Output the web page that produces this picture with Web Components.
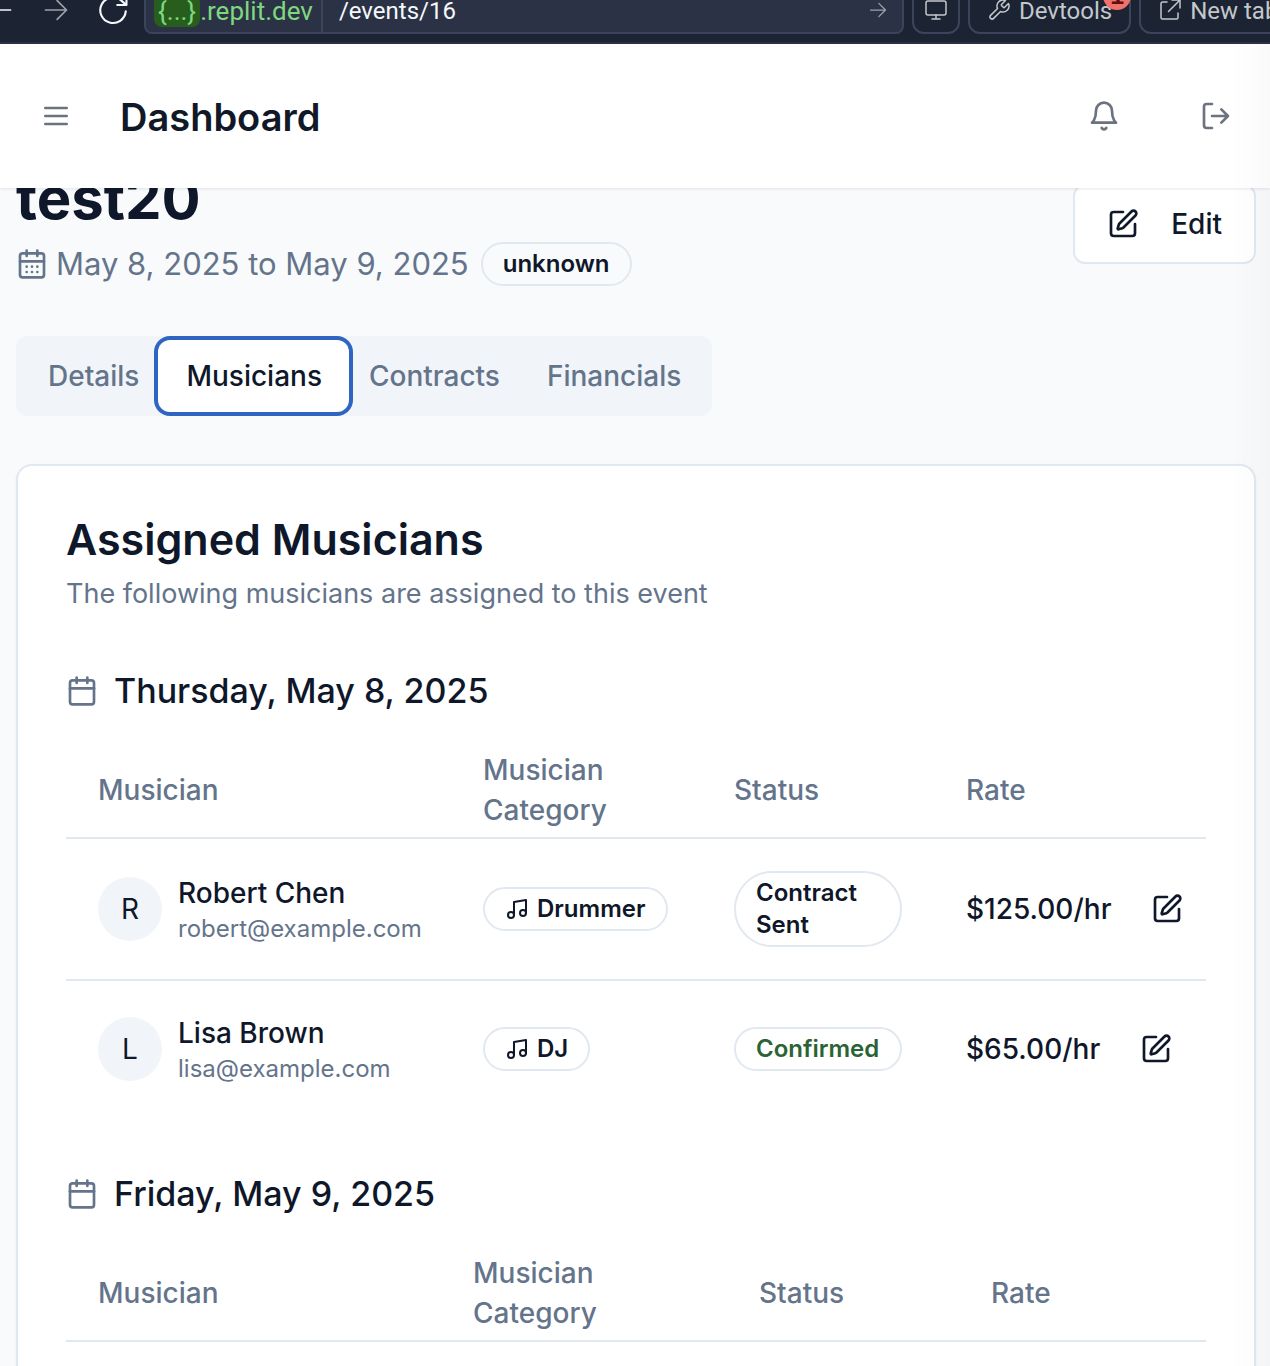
<!DOCTYPE html>
<html lang="en">
<head>
<meta charset="utf-8">
<meta name="viewport" content="width=device-width, initial-scale=1">
<title>Dashboard</title>
<style>
  :root {
    --ink: #0f172a; --muted: #64748b; --line: #e2e8f0; --page: #f9fafc; --soft: #f1f5f9;
  }
  html, body { height: 100%; }
  body { margin: 0; overflow: hidden; background: var(--page); color: var(--ink);
    font-family: Inter, "Liberation Sans", sans-serif; font-size: 28px; line-height: 40px; }
</style>
</head>
<body>
<events-page></events-page>
<script>
const ICONS = {
  left: '<path d="M21 12H3M11 4l-8 8 8 8"/>',
  right: '<path d="M3 12h18M13 4l8 8-8 8"/>',
  reload: '<path d="M21 13a9 9 0 1 1-3.500-8L21 8"/><path d="M21.500 2v6.500h-6.500"/>',
  monitor: '<rect x="2" y="3" width="20" height="14" rx="2"/><path d="M8 21h8M12 17v4"/>',
  wrench: '<path d="M14.700 6.300a1 1 0 0 0 0 1.400l1.600 1.600a1 1 0 0 0 1.400 0l3.770-3.770a6 6 0 0 1-7.940 7.940l-6.910 6.910a2.120 2.120 0 0 1-3-3l6.910-6.910a6 6 0 0 1 7.940-7.940l-3.760 3.760z"/>',
  external: '<path d="M9 4H4.500A1.500 1.500 0 0 0 3 5.500v14A1.500 1.500 0 0 0 4.500 21h14a1.500 1.500 0 0 0 1.500-1.500V15M14 2h8v8M22 2 10.500 13.500"/>',
  menu: '<path d="M4 12h16M4 6h16M4 18h16"/>',
  bell: '<path d="M6 8a6 6 0 0 1 12 0c0 7 3 9 3 9H3s3-2 3-9"/><path d="M10.300 21a1.940 1.940 0 0 0 3.400 0"/>',
  logout: '<path d="M9 21H5a2 2 0 0 1-2-2V5a2 2 0 0 1 2-2h4M16 17l5-5-5-5M21 12H9"/>',
  calendar: '<path d="M8 2v4M16 2v4"/><rect x="3" y="4" width="18" height="18" rx="2"/><path d="M3 10h18"/>',
  days: '<path d="M8 2v4M16 2v4"/><rect x="3" y="4" width="18" height="18" rx="2"/><path d="M3 10h18M8 14h.01M12 14h.01M16 14h.01M8 18h.01M12 18h.01M16 18h.01"/>',
  edit: '<path d="M12 3H5a2 2 0 0 0-2 2v14a2 2 0 0 0 2 2h14a2 2 0 0 0 2-2v-7"/><path d="M18.375 2.625a1 1 0 0 1 3 3l-9.013 9.014a2 2 0 0 1-.853.505l-2.873.84a.5.5 0 0 1-.62-.62l.84-2.873a2 2 0 0 1 .506-.852z"/>',
  music: '<path d="M9 18V5l12-2v13"/><circle cx="6" cy="18" r="3"/><circle cx="18" cy="16" r="3"/>'
};

const BASE = `*, *::before, *::after { box-sizing: border-box; }
  button { font: inherit; color: inherit; background: none; border: 0; padding: 0; margin: 0; cursor: pointer; }
  h1, h2, h3, p { margin: 0; }`;

class BaseElement extends HTMLElement {
  constructor() { super(); this.attachShadow({ mode: 'open' }); }
  connectedCallback() { this.shadowRoot.innerHTML = `<style>${BASE}${this.styles()}</style>${this.view()}`; }
}

customElements.define('ui-icon', class extends BaseElement {
  styles() { return `:host { display: block; flex: none; width: var(--icon, 32px); height: var(--icon, 32px); }
    svg { display: block; width: 100%; height: 100%; fill: none; stroke: currentColor; stroke-linecap: round; stroke-linejoin: round; }`; }
  view() { return `<svg viewBox="0 0 24 24" stroke-width="${this.getAttribute('weight') || 2}" aria-hidden="true">${ICONS[this.getAttribute('name')]}</svg>`; }
});

customElements.define('status-badge', class extends BaseElement {
  styles() { return `:host { display: inline-flex; align-items: center; gap: 8px; min-height: 44px; padding: 4px 20px;
      border: 2px solid var(--line); border-radius: 38px; font-size: 24px; line-height: 32px; font-weight: 600; vertical-align: middle; }
    :host([tone="success"]) { color: #2a6335; }
    ::slotted(ui-icon) { --icon: 24px; }`; }
  view() { return `<slot></slot>`; }
});

customElements.define('browser-bar', class extends BaseElement {
  styles() { return `:host { display: flex; align-items: flex-end; height: 44px; padding-bottom: 8px; overflow: hidden;
      background: #1c2333; border-bottom: 2px solid #2b3245; color: #c2c8cc;
      font-family: Roboto, "Liberation Sans", sans-serif; font-size: 24px; line-height: 32px; }
    .nav { display: flex; flex: none; align-items: center; width: 144px; height: 48px; gap: 28px; color: #f5f9fc; --icon: 28px; }
    .nav button:first-child { margin-left: -14px; }
    .nav .off { color: #9da2a6; }
    .nav .reload { margin-left: -2px; --icon: 34px; }
    .address { display: flex; flex: 1; min-width: 0; align-items: center; height: 48px; background: #2b3245; border: 2px solid #3c445c; border-radius: 8px; }
    .host { display: flex; align-items: center; align-self: stretch; padding: 2px 8px 0; border-right: 2px solid #3c445c; color: #7fd77f; font-size: 26px; }
    .chip { background: #285e1d; border-radius: 8px; padding: 0 4px; }
    input { flex: 1; min-width: 0; border: 0; padding: 2px 16px 0; background: none; color: #f5f9fc; font: inherit; outline: 0; }
    .go { color: #9da2a6; padding-right: 14px; --icon: 20px; }
    .tools { display: flex; flex: none; gap: 8px; padding-left: 8px; width: 366px; }
    .tools button { position: relative; display: flex; flex: none; align-items: center; gap: 8px; height: 48px; padding: 0 17px; border: 2px solid #3c445c; border-radius: 12px; --icon: 24px; white-space: nowrap; }
    .tools button:first-child { padding: 0 10px; }
    .label { padding-top: 2px; }
    .count { position: absolute; right: -2px; top: -6px; width: 28px; height: 28px; border-radius: 50%; background: #f0716b; color: #5c0f0b; font-family: "Liberation Mono", monospace; font-size: 24px; line-height: 32px; text-align: center; font-weight: 700; }`; }
  view() { return `
    <div class="nav">
      <button aria-label="Back"><ui-icon name="left" weight="1.5"></ui-icon></button>
      <button class="off" aria-label="Forward"><ui-icon name="right" weight="1.5"></ui-icon></button>
      <button class="reload" aria-label="Reload"><ui-icon name="reload" weight="1.5"></ui-icon></button>
    </div>
    <div class="address">
      <div class="host"><span class="chip">{...}</span><span>.replit.dev</span></div>
      <input aria-label="Path" value="/events/16">
      <button class="go" aria-label="Go"><ui-icon name="right" weight="1.5"></ui-icon></button>
    </div>
    <div class="tools">
      <button aria-label="Device"><ui-icon name="monitor" weight="1.5"></ui-icon></button>
      <button><ui-icon name="wrench" weight="1.5"></ui-icon><span class="label">Devtools</span><span class="count">1</span></button>
      <button><ui-icon name="external" weight="1.5"></ui-icon><span class="label">New tab</span></button>
    </div>`; }
});

customElements.define('app-header', class extends BaseElement {
  styles() { return `:host { position: relative; z-index: 1; display: flex; align-items: center; height: 144px; padding: 0 38px 0 40px;
      background: #fff; color: #6b7280; box-shadow: 0 1px 3px rgba(15, 23, 42, .1); }
    h2 { flex: 1; margin-left: 48px; padding-top: 2px; color: #111827; font-size: 38px; line-height: 56px; font-weight: 600; }
    .actions { display: flex; gap: 80px; }`; }
  view() { return `
    <button aria-label="Menu"><ui-icon name="menu"></ui-icon></button>
    <h2>Dashboard</h2>
    <div class="actions">
      <button aria-label="Notifications"><ui-icon name="bell"></ui-icon></button>
      <button aria-label="Log out"><ui-icon name="logout"></ui-icon></button>
    </div>`; }
});

customElements.define('event-title', class extends BaseElement {
  styles() { return `:host { display: flex; align-items: center; justify-content: space-between; }
    h1 { font-size: 58px; line-height: 72px; font-weight: 700; }
    .meta { display: flex; align-items: center; gap: 8px; margin-top: 8px; color: var(--muted); font-size: 31px; line-height: 44px; }
    status-badge { margin-left: 4px; color: var(--ink); }
    .edit { display: flex; align-items: center; gap: 32px; height: 80px; padding: 0 32px; background: #fff; border: 2px solid var(--line); border-radius: 12px; font-weight: 500; }`; }
  view() { return `
    <div>
      <h1>test20</h1>
      <div class="meta"><ui-icon name="days"></ui-icon><span>May 8, 2025 to May 9, 2025</span><status-badge>unknown</status-badge></div>
    </div>
    <button class="edit"><ui-icon name="edit"></ui-icon>Edit</button>`; }
});

customElements.define('event-tabs', class extends BaseElement {
  styles() { return `:host { display: flex; align-self: flex-start; padding: 8px; background: var(--soft); border-radius: 12px; }
    div { display: flex; }
    button { height: 64px; padding: 0 23px 0 24px; color: var(--muted); font-weight: 500; border-radius: 8px; }
    [aria-selected="true"] { color: var(--ink); background: #fff; box-shadow: 0 0 0 4px #fff, 0 0 0 8px #2f65c0; }`; }
  view() { return `<div role="tablist">${['Details', 'Musicians', 'Contracts', 'Financials'].map(t =>
      `<button role="tab" aria-selected="${t === 'Musicians'}">${t}</button>`).join('')}</div>`; }
});

const SCHEDULE = {
  'Thursday, May 8, 2025': [
    { name: 'Robert Chen', email: 'robert@example.com', category: 'Drummer', status: 'Contract Sent', rate: '$125.00/hr' },
    { name: 'Lisa Brown', email: 'lisa@example.com', category: 'DJ', status: 'Confirmed', tone: 'success', rate: '$65.00/hr' }
  ],
  'Friday, May 9, 2025': []
};

customElements.define('day-schedule', class extends BaseElement {
  styles() { return `:host { display: block; }
    h3 { display: flex; align-items: center; gap: 16px; font-size: 34px; line-height: 56px; font-weight: 500; margin-bottom: 24px; }
    h3 ui-icon { color: var(--muted); }
    table { width: 100%; table-layout: fixed; border-collapse: separate; border-spacing: 0; }
    th, td { padding: 0 0 0 32px; text-align: left; vertical-align: middle; }
    th { height: 96px; padding-right: 32px; color: var(--muted); font-weight: 500; border-bottom: 2px solid var(--line); }
    td { padding-top: 32px; padding-bottom: 32px; }
    tr:not(:last-child) td { border-bottom: 2px solid var(--line); }
    td.status { padding-right: 32px; }
    .who { display: flex; align-items: center; gap: 16px; }
    .avatar { flex: none; width: 64px; height: 64px; border-radius: 50%; background: var(--soft); text-align: center; line-height: 64px; }
    .name { font-weight: 500; }
    .email { color: var(--muted); font-size: 24px; line-height: 32px; }
    .status status-badge { display: flex; }
    .rate { display: flex; align-items: center; gap: 16px; font-weight: 500; }
    .rate button { padding: 0 24px; }`; }
  view() {
    const day = this.getAttribute('day');
    const cols = this.getAttribute('columns').split(' ');
    return `<h3><ui-icon name="calendar"></ui-icon>${day}</h3>
    <table>
      <colgroup>${cols.map(w => `<col style="width:${w}">`).join('')}<col></colgroup>
      <thead><tr><th>Musician</th><th>Musician Category</th><th>Status</th><th>Rate</th></tr></thead>
      <tbody>${SCHEDULE[day].map(m => `<tr>
        <td><div class="who"><span class="avatar">${m.name[0]}</span><div><div class="name">${m.name}</div><div class="email">${m.email}</div></div></div></td>
        <td><status-badge><ui-icon name="music"></ui-icon>${m.category}</status-badge></td>
        <td class="status"><status-badge tone="${m.tone || ''}">${m.status}</status-badge></td>
        <td><div class="rate">${m.rate}<button aria-label="Edit ${m.name}"><ui-icon name="edit"></ui-icon></button></div></td>
      </tr>`).join('')}</tbody>
    </table>`; }
});

customElements.define('content-card', class extends BaseElement {
  styles() { return `:host { display: flex; flex-direction: column; gap: 49px; padding: 48px; background: #fff; border: 2px solid var(--line); border-radius: 16px; box-shadow: 0 1px 3px rgba(15, 23, 42, .06); }
    h2 { font-size: 43px; line-height: 50px; font-weight: 600; }
    p { margin-top: 10px; color: var(--muted); font-size: 27px; }`; }
  view() { return `<header><h2>${this.getAttribute('heading')}</h2><p>${this.getAttribute('description')}</p></header><slot></slot>`; }
});

customElements.define('events-page', class extends BaseElement {
  styles() { return `:host { display: block; }
    main { display: flex; flex-direction: column; margin-top: -26px; padding: 0 14px 48px 16px; }
    event-tabs { margin: 50px 0 48px; }
    .edge { position: fixed; z-index: 2; top: 44px; right: 0; bottom: 0; width: 40px; pointer-events: none; background: linear-gradient(to right, transparent, rgba(0, 0, 0, .02)); }`; }
  view() { return `
    <browser-bar></browser-bar>
    <app-header></app-header>
    <main>
      <event-title></event-title>
      <event-tabs></event-tabs>
      <content-card heading="Assigned Musicians" description="The following musicians are assigned to this event">
        <day-schedule day="Thursday, May 8, 2025" columns="385px 251px 232px"></day-schedule>
        <day-schedule day="Friday, May 9, 2025" columns="375px 286px 232px"></day-schedule>
      </content-card>
    </main>
    <div class="edge"></div>`; }
});
</script>
</body>
</html>
